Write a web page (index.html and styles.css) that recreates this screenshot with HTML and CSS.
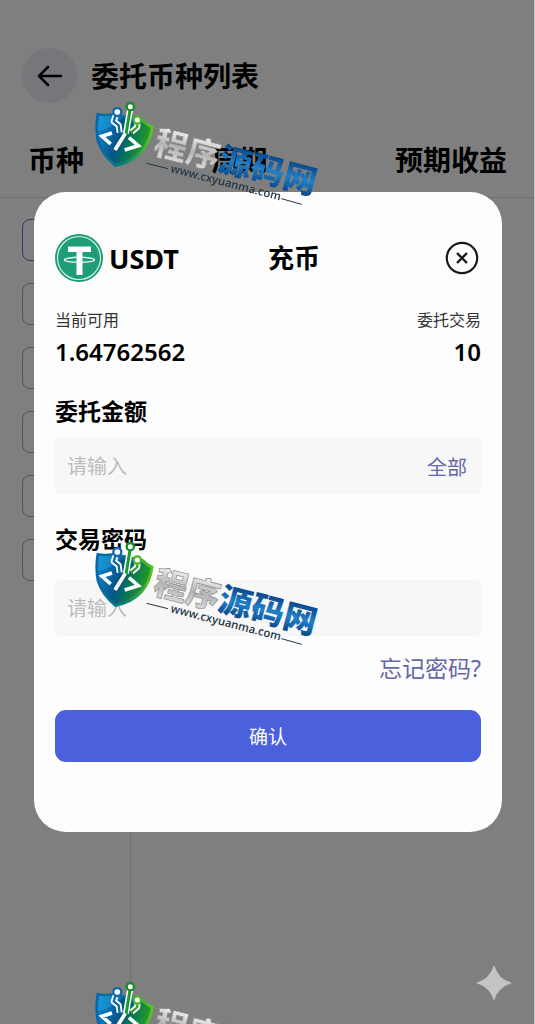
FILE: index.html
```html
<!DOCTYPE html>
<html lang="zh-CN">
<head>
  <meta charset="UTF-8" />
  <meta name="viewport" content="width=device-width, initial-scale=1.0" />
  <title>委托币种列表</title>
  <link rel="stylesheet" href="styles.css">
</head>
<body>
  <div class="page">
    <header class="topbar">
      <button class="back" type="button" aria-label="返回">
        <svg width="26" height="26" viewBox="0 0 26 26" fill="none" stroke="#000" stroke-width="2.5" stroke-linecap="round" stroke-linejoin="round">
          <path d="M24 13H2M11 4L2 13l9 9" />
        </svg>
      </button>
      <h1>委托币种列表</h1>
    </header>

    <div class="columns">
      <span>币种</span>
      <span>周期</span>
      <span>预期收益</span>
    </div>

    <div class="sidebar">
      <div class="coin active"></div>
      <div class="coin"></div>
      <div class="coin"></div>
      <div class="coin"></div>
      <div class="coin"></div>
      <div class="coin"></div>
    </div>
  </div>

  <div class="overlay">
    <form class="modal">
      <div class="modal-head">
        <div class="token">
          <svg width="48" height="48" viewBox="0 0 48 48">
            <circle cx="24" cy="24" r="24" fill="#1f9d78" />
            <circle cx="24" cy="24" r="21.5" fill="none" stroke="#d5f1e6" stroke-width="1.2" />
            <path d="M13 12.500h23v5.500h-8.500v23h-6v-23H13z" fill="#fff" />
            <path d="M21.500 23.300C5 24 5 28 24.500 28.300C44 28 44 24 27.500 23.300" fill="none" stroke="#e4f7ef" stroke-width="1.400" />
          </svg>
          <span>USDT</span>
        </div>
        <div class="modal-title">
          <h2>充币</h2>
          <button class="close" type="button" aria-label="关闭">
            <svg width="34" height="34" viewBox="0 0 34 34" fill="none" stroke="#1a1a1a">
              <circle cx="17" cy="17" r="15.200" stroke-width="2.200" />
              <path d="M12 12l10 10M22 12L12 22" stroke-width="2.400" />
            </svg>
          </button>
        </div>
      </div>

      <div class="stats">
        <div class="stat">
          <span class="stat-label">当前可用</span>
          <strong>1.64762562</strong>
        </div>
        <div class="stat right">
          <span class="stat-label">委托交易</span>
          <strong>10</strong>
        </div>
      </div>

      <div class="field">
        <label for="amount">委托金额</label>
        <div class="box">
          <input id="amount" type="text" placeholder="请输入">
          <button class="all" type="button">全部</button>
        </div>
      </div>

      <div class="field password">
        <label for="password">交易密码</label>
        <div class="box">
          <input id="password" type="password" placeholder="请输入">
        </div>
      </div>

      <a class="forgot" href="#">忘记密码?</a>
      <button class="submit" type="button">确认</button>
    </form>
  </div>

  <div class="watermarks">
    <svg class="watermark" viewBox="0 0 750 360">
      <defs>
        <linearGradient id="shield" x1="0" y1="0.300" x2="1" y2="0.600">
          <stop offset="0" stop-color="#0a86cc" />
          <stop offset="0.400" stop-color="#065487" />
          <stop offset="0.650" stop-color="#07784f" />
          <stop offset="1" stop-color="#2fa61c" />
        </linearGradient>
        <linearGradient id="rim" x1="0" y1="0" x2="1" y2="0">
          <stop offset="0" stop-color="#0b62ad" />
          <stop offset="0.500" stop-color="#0a7f78" />
          <stop offset="1" stop-color="#62c81c" />
        </linearGradient>
        <linearGradient id="silver" x1="0" y1="0" x2="0" y2="1">
          <stop offset="0.200" stop-color="#f1f1f1" />
          <stop offset="0.550" stop-color="#b4b4b4" />
          <stop offset="0.900" stop-color="#dedede" />
        </linearGradient>
        <linearGradient id="blue" x1="0" y1="0" x2="0" y2="1">
          <stop offset="0.200" stop-color="#083f82" />
          <stop offset="0.550" stop-color="#1f80ca" />
          <stop offset="0.900" stop-color="#0a4385" />
        </linearGradient>
        <g id="mark">
          <path d="M50 68Q76 74 102 68L190 88Q204 102 221 109Q216 155 187 189Q158 221 105 231Q64 198 50 154Q42 112 50 68z" fill="url(#rim)" />
          <path d="M57 77Q78 81 104 76L186 96Q199 108 212 114Q206 153 181 182Q152 211 107 222Q71 192 58 152Q51 112 57 77z" fill="url(#shield)" />
          <path d="M57 77Q78 81 104 76L124 81Q118 106 54 124Q53 100 57 77z" fill="#35b5ee" opacity="0.300" />
          <g fill="none" stroke-linejoin="round">
            <path d="M107 76L101 94L116 106L119 128M150 60L138 130M172 98L172 111L155 126" stroke="#fff" stroke-width="18" />
            <path d="M107 76L101 94L116 106L119 130" stroke="#0d68ad" stroke-width="7" />
            <path d="M150 60L138 132" stroke="#189b37" stroke-width="9" />
            <path d="M172 98L172 111L153 128" stroke="#2d9f2a" stroke-width="7" />
          </g>
          <g fill="#fff" stroke-width="7">
            <circle cx="112" cy="66" r="12" stroke="#1268b5" />
            <circle cx="151" cy="50" r="11" stroke="#168c2c" />
            <circle cx="172" cy="90" r="11" stroke="#48b52a" />
          </g>
          <path d="M96 129L66 139L92 162M136 130L105 180M147 143L175 167L134 180" fill="none" stroke="#fff" stroke-width="11" />
          <g transform="translate(216 189) rotate(14.500)">
            <text class="brand"><tspan fill="url(#silver)" stroke="#8d8d8d" stroke-width="2">程序</tspan><tspan fill="url(#blue)">源码网</tspan></text>
          </g>
          <path d="M200 220L264 236M604 326L665 343" stroke="#243746" stroke-width="3" />
          <g transform="translate(270 246) rotate(14.500)">
            <text class="site">www.cxyuanma.com</text>
          </g>
        </g>
      </defs>
      <use href="#mark" />
    </svg>
    <svg class="watermark" viewBox="0 0 750 360"><use href="#mark" /></svg>
    <svg class="watermark" viewBox="0 0 750 360"><use href="#mark" /></svg>
  </div>

  <svg class="sparkle" viewBox="0 0 36 36">
    <path d="M18 0Q22 14 36 18Q22 22 18 36Q14 22 0 18Q14 14 18 0z" fill="#c4c4c4" />
  </svg>
</body>
</html>
```

FILE: styles.css
```css
* {
  margin: 0;
  padding: 0;
  box-sizing: border-box;
}
body {
  font-family: "Noto Sans", "Noto Sans CJK SC", sans-serif;
  color: #000;
  background: #fff;
}
button {
  font-family: inherit;
  border: none;
  background: none;
  cursor: pointer;
}
.page {
  display: flex;
  flex-direction: column;
  height: 100vh;
  overflow: hidden;
}
.topbar {
  display: flex;
  align-items: center;
  gap: 14px;
  padding: 48px 22px 0;
}
.back {
  display: flex;
  align-items: center;
  justify-content: center;
  width: 55px;
  height: 55px;
  border-radius: 50%;
  background: #eeeef6;
}
.topbar h1 {
  font-size: 28px;
  line-height: 40px;
  font-weight: 700;
}
.columns {
  display: flex;
  justify-content: space-between;
  padding: 37px 28px 17px;
  border-bottom: 1px solid #e2e2e2;
  font-size: 28px;
  line-height: 40px;
  font-weight: 700;
}
.sidebar {
  flex: 1;
  display: flex;
  flex-direction: column;
  gap: 22px;
  width: 131px;
  padding: 21px 12px 0 22px;
  border-right: 1px solid #e2e2e2;
}
.coin {
  height: 42px;
  border: 1px solid #a4a4a4;
  border-radius: 8px;
}
.coin.active {
  border-color: #6a74c0;
}
.overlay {
  position: fixed;
  top: 0;
  left: 0;
  width: 100%;
  height: 100%;
  padding: 192px 32px 0 34px;
  background: rgba(0, 0, 0, 0.5);
  border-right: 1px solid #c4c4c4;
}
.modal {
  display: flex;
  flex-direction: column;
  padding: 42px 21px 70px;
  border-radius: 32px;
  background: #fdfdfd;
}
.modal-head {
  display: grid;
  grid-template-columns: 1fr 1fr;
  align-items: center;
}
.token {
  display: flex;
  align-items: center;
  gap: 6px;
  font-size: 27px;
  font-weight: 700;
}
.modal-title {
  display: flex;
  align-items: center;
  justify-content: space-between;
}
.modal-title h2 {
  font-size: 26px;
  line-height: 40px;
  font-weight: 700;
}
.close {
  display: flex;
  margin-right: 2px;
}
.stats {
  display: flex;
  justify-content: space-between;
  margin-top: 28px;
}
.stat {
  display: flex;
  flex-direction: column;
  gap: 6px;
}
.stat.right {
  align-items: flex-end;
}
.stat-label {
  font-size: 16px;
  line-height: 20px;
  color: #333;
}
.stat strong {
  font-size: 24px;
  line-height: 32px;
  font-weight: 600;
}
.field {
  display: flex;
  flex-direction: column;
  gap: 12px;
  margin-top: 28px;
}
.field.password {
  gap: 26px;
  margin-top: 30px;
}
.field label {
  font-size: 23px;
  line-height: 30px;
  font-weight: 700;
}
.box {
  display: flex;
  align-items: center;
  height: 56px;
  padding: 0 14px 0 12px;
  border-radius: 4px;
  background: #f7f7f7;
}
.box input {
  flex: 1;
  min-width: 0;
  border: none;
  outline: none;
  background: none;
  font-family: inherit;
  font-size: 20px;
}
.box input::placeholder {
  color: #bdbdbd;
}
.all {
  font-size: 20px;
  color: #6667a8;
}
.forgot {
  align-self: flex-end;
  margin-top: 16px;
  font-size: 23px;
  line-height: 32px;
  color: #6667a8;
  text-decoration: none;
}
.submit {
  height: 52px;
  margin-top: 26px;
  border-radius: 11px;
  background: #4a60dc;
  color: #fff;
  font-size: 19px;
}
.watermarks {
  position: fixed;
  top: 0;
  left: 0;
  width: 100%;
  height: 100%;
  display: flex;
  flex-direction: column;
  gap: 320px;
  padding: 90px 0 0 80px;
  overflow: hidden;
  pointer-events: none;
}
.watermark {
  flex: none;
  width: 250px;
  height: 120px;
}
.brand {
  font-family: "Noto Sans CJK SC", sans-serif;
  font-size: 100px;
  font-weight: 900;
}
.site {
  font-family: "Open Sans", sans-serif;
  font-size: 34px;
  font-weight: 600;
  fill: #243746;
}
.sparkle {
  position: fixed;
  right: 23px;
  bottom: 23px;
  width: 36px;
  height: 36px;
}
```
